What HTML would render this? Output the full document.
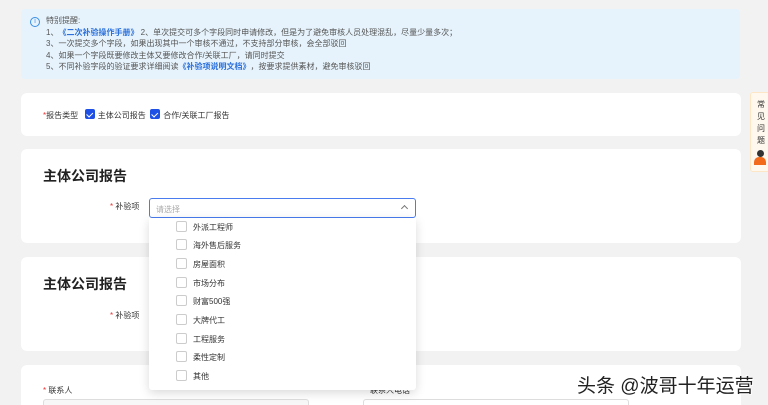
<!DOCTYPE html>
<html><head><meta charset="utf-8"><style>
*{margin:0;padding:0;box-sizing:border-box}
html,body{width:768px;height:405px;overflow:hidden}
body{background:#f2f2f2;font-family:"Liberation Sans","Noto Sans CJK SC",sans-serif;position:relative;color:#333}
.abs{position:absolute}
.card{position:absolute;left:21px;width:720px;background:#fff;border-radius:6px}
.note{left:21px;top:9px;width:719px;height:70px;background:#e6f3fc;border-radius:4px;font-size:8px;color:#555;line-height:11.5px;padding:6px 0 0 25px}
.note a{color:#2a6fdb;font-weight:bold}
.cb{display:inline-block;width:10px;height:10px;border-radius:2px;background:#1e50e6;vertical-align:-1px;position:relative;margin-right:3px}
.cb:after{content:"";position:absolute;left:3px;top:1.5px;width:2.5px;height:4.5px;border:solid #fff;border-width:0 1.3px 1.3px 0;transform:rotate(45deg)}
.h{font-size:14px;font-weight:bold;color:#222}
.lbl{font-size:8px;color:#333}
.lbl b{color:#e33;font-weight:normal}
.item{position:absolute;left:176px;font-size:8px;color:#333;height:12px;line-height:12px}
.item i{display:inline-block;width:11px;height:11px;border:1px solid #ccc;border-radius:2px;vertical-align:-2px;margin-right:6px}
</style></head><body>
<div class="abs note">
<div style="position:absolute;left:9px;top:8px;width:10px;height:10px;border:1px solid #3a8ee6;border-radius:50%;font-size:7px;color:#3a8ee6;text-align:center;line-height:8px">i</div>
<div>特别提醒:</div>
<div>1、<a>《二次补验操作手册》</a> 2、单次提交可多个字段同时申请修改，但是为了避免审核人员处理混乱，尽量少量多次；</div>
<div>3、一次提交多个字段，如果出现其中一个审核不通过，不支持部分审核，会全部驳回</div>
<div>4、如果一个字段既要修改主体又要修改合作/关联工厂，请同时提交</div>
<div>5、不同补验字段的验证要求详细阅读<a>《补验项说明文档》</a>，按要求提供素材，避免审核驳回</div>
</div>
<div class="card" style="top:93px;height:43px"><div class="lbl abs" style="left:22px;top:16px"><b>*</b>报告类型 &nbsp;&nbsp;<span class="cb"></span>主体公司报告 &nbsp;<span class="cb"></span>合作/关联工厂报告</div></div>
<div class="card" style="top:149px;height:94px"><div class="h abs" style="left:22px;top:17px">主体公司报告</div><div class="lbl abs" style="left:89px;top:52px"><b>*</b> 补验项</div></div>
<div class="card" style="top:257px;height:94px"><div class="h abs" style="left:22px;top:17px">主体公司报告</div><div class="lbl abs" style="left:89px;top:53px"><b>*</b> 补验项</div></div>
<div class="card" style="top:365px;height:60px"><div class="lbl abs" style="left:22px;top:20px"><b>*</b> 联系人</div><div class="abs" style="left:22px;top:34px;width:266px;height:20px;border:1px solid #ddd;border-radius:3px;background:#f7f7f7"></div><div class="lbl abs" style="left:349px;top:20px">联系人电话</div><div class="abs" style="left:342px;top:34px;width:266px;height:20px;border:1px solid #ddd;border-radius:3px"></div></div>
<div class="abs" style="left:149px;top:198px;width:267px;height:20px;border:1px solid #4a7cf0;border-radius:3px;background:#fff;font-size:8px;color:#aaa;padding:5px 0 0 6px">请选择<span style="position:absolute;right:8px;top:7px;width:5px;height:5px;border-left:1px solid #777;border-top:1px solid #777;transform:rotate(45deg)"></span></div>
<div class="abs" style="left:149px;top:218px;width:267px;height:172px;background:#fff;border-radius:0 0 3px 3px;box-shadow:0 3px 10px rgba(0,0,0,.15)"></div>
<div class="item" style="top:221px"><i></i>外派工程师</div>
<div class="item" style="top:239px"><i></i>海外售后服务</div>
<div class="item" style="top:258px"><i></i>房屋面积</div>
<div class="item" style="top:277px"><i></i>市场分布</div>
<div class="item" style="top:295px"><i></i>财富500强</div>
<div class="item" style="top:314px"><i></i>大牌代工</div>
<div class="item" style="top:333px"><i></i>工程服务</div>
<div class="item" style="top:351px"><i></i>柔性定制</div>
<div class="item" style="top:370px"><i></i>其他</div>
<div class="abs" style="left:750px;top:92px;width:22px;height:80px;background:#fff8ee;border:1px solid #fde6c4;border-radius:3px;font-size:8px;line-height:12px;padding:6px 0 0 6px;color:#333">常<br>见<br>问<br>题</div>
<div class="abs" style="left:754px;top:150px;width:12px;height:18px"><div style="width:7px;height:7px;border-radius:50%;background:#333;margin-left:3px"></div><div style="width:12px;height:8px;background:#f26b1d;border-radius:5px 5px 0 0"></div></div>
<div class="abs" style="left:577px;top:371px;font-size:19px;color:#222;text-shadow:1px 1px 0 #fff,-1px -1px 0 #fff">头条 @波哥十年运营</div>
</body></html>
